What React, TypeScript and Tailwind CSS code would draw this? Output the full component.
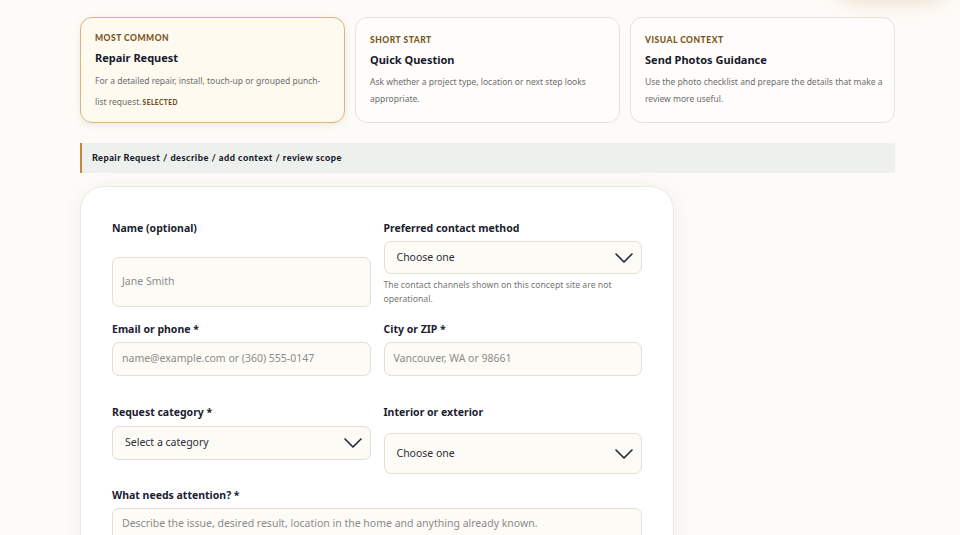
import React from 'react'

const sans = { fontFamily: '"Noto Sans", "Open Sans", sans-serif' }
const heavy = { fontFamily: 'Lato, "Noto Sans", sans-serif' }

interface OptionCard {
  eyebrow: string
  title: string
  text: string
  selected?: boolean
}

const cards: OptionCard[] = [
  {
    eyebrow: 'Most common',
    title: 'Repair Request',
    text: 'For a detailed repair, install, touch-up or grouped punch-list request.',
    selected: true,
  },
  {
    eyebrow: 'Short start',
    title: 'Quick Question',
    text: 'Ask whether a project type, location or next step looks appropriate.',
  },
  {
    eyebrow: 'Visual context',
    title: 'Send Photos Guidance',
    text: 'Use the photo checklist and prepare the details that make a review more useful.',
  },
]

const Chevron = () => (
  <svg width="18" height="10" viewBox="0 0 18 10" fill="none" className="shrink-0">
    <path d="M1 1l8 8 8-8" stroke="#1f2430" strokeWidth="1.6" strokeLinecap="round" strokeLinejoin="round" />
  </svg>
)

const Label = ({ children }: { children: React.ReactNode }) => (
  <label className="block text-[10.5px] leading-[14px] font-bold text-[#1c2130]">{children}</label>
)

const Input = ({ placeholder, className = '' }: { placeholder: string; className?: string }) => (
  <div
    className={`flex items-center px-[9px] rounded-[7px] border border-[#e3dfd7] bg-[#fdfbf6] text-[10.5px] text-[#8b8b8b] ${className}`}
  >
    {placeholder}
  </div>
)

const Select = ({ value, className = '' }: { value: string; className?: string }) => (
  <div
    className={`flex items-center justify-between pl-[12px] pr-[8px] rounded-[7px] border border-[#e3dfd7] bg-[#fdfbf6] text-[10.5px] text-[#2a2e38] ${className}`}
  >
    <span>{value}</span>
    <Chevron />
  </div>
)

export default function App() {
  return (
    <div className="relative min-h-[535px] bg-[#fcfbf7] overflow-hidden" style={sans}>
      {/* shadow of the header element above the fold */}
      <div className="absolute -top-[44px] right-[14px] w-[110px] h-[40px] rounded-full shadow-[0_6px_18px_rgba(214,170,120,0.35)]" />

      <div className="ml-[80px] w-[815px] pt-[17px]">
        {/* request type cards */}
        <div className="grid grid-cols-3 gap-[10px]">
          {cards.map((card) => (
            <div
              key={card.title}
              className={
                card.selected
                  ? 'h-[106px] rounded-[12px] border border-[#d8b57f] bg-[#fefaf0] pl-[14px] pr-[18px] pt-[14px] shadow-[0_2px_7px_rgba(180,140,80,0.14)]'
                  : 'h-[106px] rounded-[12px] border border-[#e6e3dd] bg-[#fefdfb] pl-[14px] pr-[10px] pt-[16px]'
              }
            >
              <div
                className="text-[8.5px] leading-[12px] font-black uppercase tracking-[0.06em] text-[#7b5522]"
                style={heavy}
              >
                {card.eyebrow}
              </div>
              <div className="mt-[7px] text-[11px] leading-[14px] font-bold text-[#151a2b]">{card.title}</div>
              <p
                className={
                  card.selected
                    ? 'mt-[5px] text-[8.5px] leading-[21px] text-[#6d6d6d]'
                    : 'mt-[6px] text-[8.5px] leading-[17px] text-[#6d6d6d]'
                }
              >
                {card.text}
                {card.selected && (
                  <span
                    className="ml-[1px] text-[6.5px] font-black uppercase tracking-[0.08em] text-[#6b4a1c]"
                    style={heavy}
                  >
                    Selected
                  </span>
                )}
              </p>
            </div>
          ))}
        </div>

        {/* breadcrumb */}
        <div className="mt-[20px] h-[30px] flex items-center border-l-[2px] border-[#c18b3e] bg-[#eef0ee] pl-[10px]">
          <span className="text-[9.2px] font-black tracking-[0.05em] text-[#161a28]" style={heavy}>
            Repair Request / describe / add context / review scope
          </span>
        </div>

        {/* form */}
        <div className="mt-[13px] w-[594px] h-[400px] rounded-[24px] border border-[#ebe8e2] bg-white px-[31px] pt-[34px] shadow-[0_4px_24px_rgba(0,0,0,0.06)]">
          <div className="grid grid-cols-2 gap-x-[13px]">
            <div className="flex flex-col h-[86px]">
              <Label>Name (optional)</Label>
              <Input placeholder="Jane Smith" className="mt-auto h-[50px]" />
            </div>
            <div>
              <Label>Preferred contact method</Label>
              <Select value="Choose one" className="mt-[6px] h-[33px]" />
              <p className="mt-[4px] text-[8.7px] leading-[14px] text-[#777]">
                The contact channels shown on this concept site are not operational.
              </p>
            </div>
          </div>

          <div className="mt-[15px] grid grid-cols-2 gap-x-[13px]">
            <div>
              <Label>Email or phone *</Label>
              <Input placeholder="name@example.com or (360) 555-0147" className="mt-[6px] h-[34px]" />
            </div>
            <div>
              <Label>City or ZIP *</Label>
              <Input placeholder="Vancouver, WA or 98661" className="mt-[6px] h-[34px]" />
            </div>
          </div>

          <div className="mt-[29px] grid grid-cols-2 gap-x-[13px]">
            <div>
              <Label>Request category *</Label>
              <Select value="Select a category" className="mt-[7px] h-[34px]" />
            </div>
            <div>
              <Label>Interior or exterior</Label>
              <Select value="Choose one" className="mt-[14px] h-[41px]" />
            </div>
          </div>

          <div className="mt-[14px]">
            <Label>What needs attention? *</Label>
            <div className="mt-[6px] h-[80px] rounded-[7px] border border-[#e3dfd7] bg-[#fdfbf6] px-[9px] pt-[7px] text-[10.5px] text-[#8b8b8b]">
              Describe the issue, desired result, location in the home and anything already known.
            </div>
          </div>
        </div>
      </div>
    </div>
  )
}
